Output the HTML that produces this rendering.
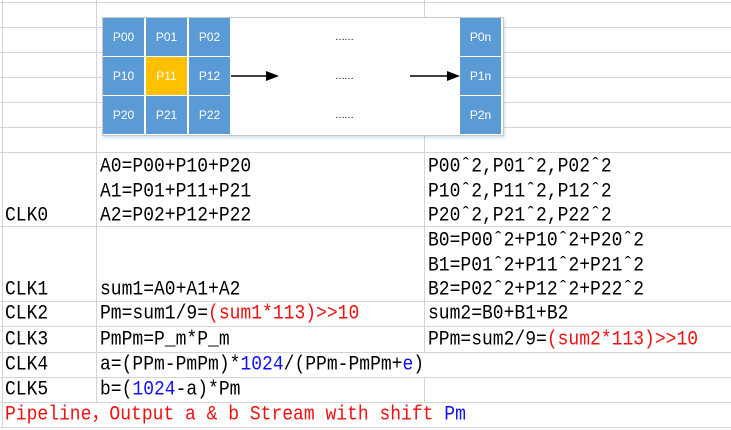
<!DOCTYPE html>
<html><head><style>
body{margin:0;width:731px;height:428px;background:#fff;position:relative;overflow:hidden;font-family:"Liberation Mono","Noto Sans CJK SC",monospace;}
.h{position:absolute;height:1px;background:#d4d4d4;}
.v{position:absolute;width:1px;background:#d4d4d4;}
.t{position:absolute;font-size:18px;line-height:25px;height:25px;white-space:pre;color:#000;transform:scaleY(1.12);transform-origin:0 50%;}
.r{color:#f01010}.b{color:#1010f0}
.c{position:absolute;width:41px;height:38px;background:#5b9bd5;color:#fff;font-family:"Liberation Sans",sans-serif;font-size:12px;text-align:center;line-height:38px;}
.y{background:#ffc000}
.d{position:absolute;font-size:10px;font-family:"Liberation Sans",sans-serif;letter-spacing:-1px}
</style></head><body>
<div class="h" style="left:0;top:2px;width:731px"></div>
<div class="h" style="left:0;top:27px;width:731px"></div>
<div class="h" style="left:0;top:52px;width:731px"></div>
<div class="h" style="left:0;top:77px;width:731px"></div>
<div class="h" style="left:0;top:102px;width:731px"></div>
<div class="h" style="left:0;top:127px;width:731px"></div>
<div class="h" style="left:0;top:152px;width:731px"></div>
<div class="h" style="left:0;top:226px;width:731px"></div>
<div class="h" style="left:0;top:301px;width:731px"></div>
<div class="h" style="left:0;top:326px;width:731px"></div>
<div class="h" style="left:0;top:352px;width:731px"></div>
<div class="h" style="left:0;top:377px;width:731px"></div>
<div class="h" style="left:0;top:402px;width:731px"></div>
<div class="h" style="left:0;top:427px;width:731px"></div>
<div class="v" style="left:2px;top:0;height:428px"></div>
<div class="v" style="left:96px;top:0;height:402px"></div>
<div class="v" style="left:424px;top:0;height:352px"></div>
<div class="v" style="left:424px;top:377px;height:25px"></div>
<div style="position:absolute;left:102px;top:17px;width:400px;height:117px;background:#fff;border:1px solid #c8c8c8;box-shadow:1px 2px 3px rgba(91,155,213,0.3)"></div>
<div class="c" style="left:103px;top:18px">P00</div><div class="c" style="left:146px;top:18px">P01</div><div class="c" style="left:189px;top:18px">P02</div>
<div class="c" style="left:103px;top:57px">P10</div><div class="c y" style="left:146px;top:57px">P11</div><div class="c" style="left:189px;top:57px">P12</div>
<div class="c" style="left:103px;top:96px">P20</div><div class="c" style="left:146px;top:96px">P21</div><div class="c" style="left:189px;top:96px">P22</div>
<div class="c" style="left:460px;top:18px">P0n</div><div class="c" style="left:460px;top:57px">P1n</div><div class="c" style="left:460px;top:96px">P2n</div>
<div class="d" style="left:335px;top:32px">……</div>
<div class="d" style="left:335px;top:71px">……</div>
<div class="d" style="left:335px;top:110px">……</div>
<svg style="position:absolute;left:0;top:0" width="731" height="150">
<line x1="231" y1="76" x2="268" y2="76" stroke="#000" stroke-width="1.5"/>
<polygon points="279,76 266,71 266,81" fill="#000"/>
<line x1="410" y1="76" x2="450" y2="76" stroke="#000" stroke-width="1.5"/>
<polygon points="460,76 447,71 447,81" fill="#000"/>
</svg>
<div class="t" style="left:100px;top:155px">A0=P00+P10+P20</div>
<div class="t" style="left:100px;top:180px">A1=P01+P11+P21</div>
<div class="t" style="left:100px;top:204px">A2=P02+P12+P22</div>
<div class="t" style="left:428px;top:155px">P00ˆ2,P01ˆ2,P02ˆ2</div>
<div class="t" style="left:428px;top:180px">P10ˆ2,P11ˆ2,P12ˆ2</div>
<div class="t" style="left:428px;top:204px">P20ˆ2,P21ˆ2,P22ˆ2</div>
<div class="t" style="left:5px;top:204px">CLK0</div>
<div class="t" style="left:428px;top:229px">B0=P00ˆ2+P10ˆ2+P20ˆ2</div>
<div class="t" style="left:428px;top:254px">B1=P01ˆ2+P11ˆ2+P21ˆ2</div>
<div class="t" style="left:428px;top:278px">B2=P02ˆ2+P12ˆ2+P22ˆ2</div>
<div class="t" style="left:5px;top:278px">CLK1</div>
<div class="t" style="left:100px;top:278px">sum1=A0+A1+A2</div>
<div class="t" style="left:5px;top:302px">CLK2</div>
<div class="t" style="left:100px;top:302px">Pm=sum1/9=<span class="r">(sum1*113)&gt;&gt;10</span></div>
<div class="t" style="left:428px;top:302px">sum2=B0+B1+B2</div>
<div class="t" style="left:5px;top:328px">CLK3</div>
<div class="t" style="left:100px;top:328px">PmPm=P_m*P_m</div>
<div class="t" style="left:428px;top:328px">PPm=sum2/9=<span class="r">(sum2*113)&gt;&gt;10</span></div>
<div class="t" style="left:5px;top:353px">CLK4</div>
<div class="t" style="left:100px;top:353px">a=(PPm-PmPm)*<span class="b">1024</span>/(PPm-PmPm+<span class="b">e</span>)</div>
<div class="t" style="left:5px;top:378px">CLK5</div>
<div class="t" style="left:100px;top:378px">b=(<span class="b">1024</span>-a)*Pm</div>
<div class="t r" style="left:5px;top:403px">Pipeline，Output a &amp; b Stream with shift <span class="b">Pm</span></div>
</body></html>
